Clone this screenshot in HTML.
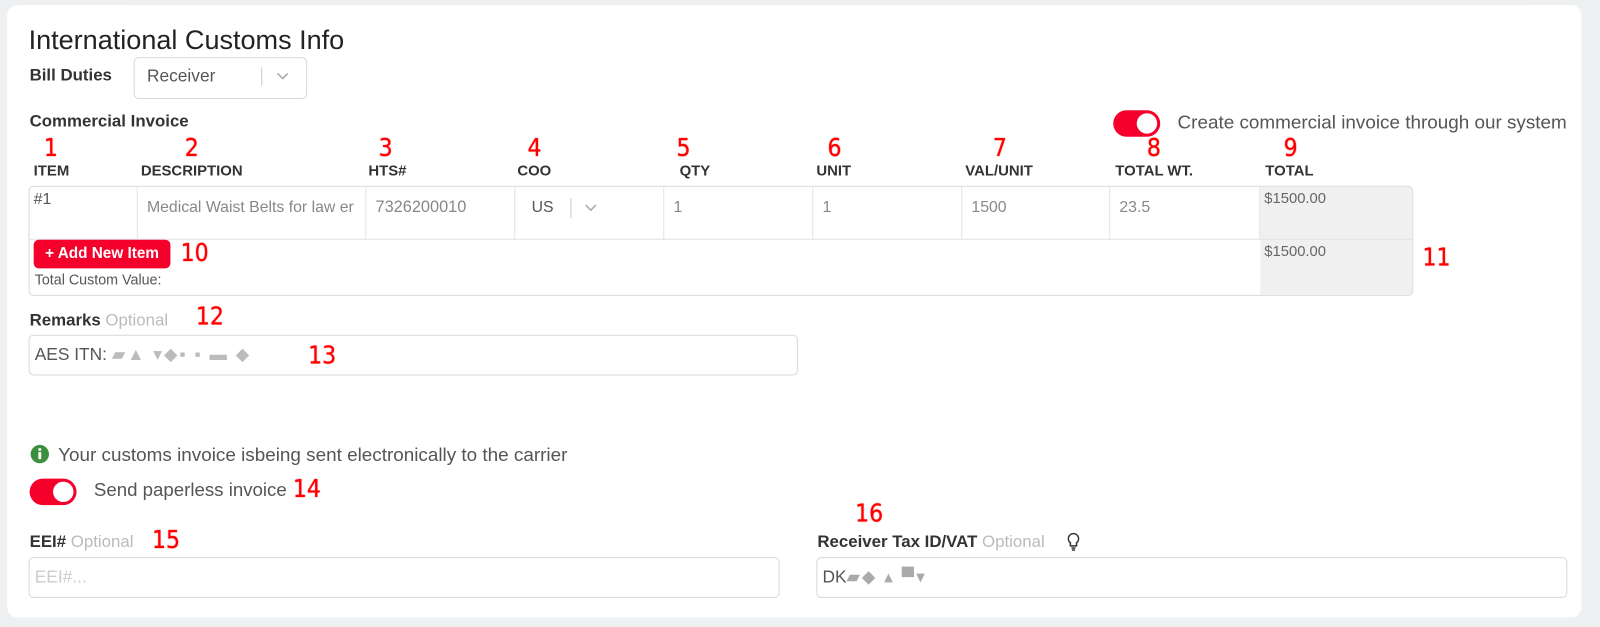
<!DOCTYPE html>
<html><head><meta charset="utf-8"><style>
body{margin:0;width:1600px;height:626px;background:#eef0f2;font-family:"Liberation Sans",sans-serif;overflow:hidden;color:#333}
#w{position:absolute;left:0;top:0;width:1568px;height:614px;transform:scale(1.0204);transform-origin:0 0}
.card{position:absolute;left:7px;top:5px;width:1543px;height:600px;background:#fff;border-radius:10px}
.a{position:absolute;white-space:nowrap}
.n{position:absolute;color:#f00;font-size:24px;font-family:"Liberation Sans Narrow","DejaVu Sans Condensed",sans-serif;text-shadow:0 0 1px #f00}
.h{font-size:14.6px;font-weight:bold;color:#333}
.box{position:absolute;border:1px solid #d9d9d9;border-radius:5px;background:#fff}
.cell{position:absolute;top:0;height:52px;border-right:1px solid #e3e3e3;font-size:15.5px;color:#888;line-height:42px;padding-left:9px;box-sizing:border-box}
.lbl{font-size:16.5px;font-weight:bold;color:#333}
.opt{color:#bbb;font-weight:normal}
.tog{position:absolute;width:46px;height:26px;border-radius:13px;background:#f5002a}
.tog::after{content:"";position:absolute;right:3px;top:3px;width:20px;height:20px;border-radius:50%;background:#fff}
</style></head><body><div id="w">
<div class="card"></div>
<div class="a" style="left:28px;top:24px;font-size:26.5px;color:#222">International Customs Info</div>
<div class="a lbl" style="left:29px;top:65px">Bill Duties</div>
<div class="box" style="left:131px;top:56px;width:168px;height:39px"></div>
<div class="a" style="left:144px;top:65px;font-size:17px;color:#555">Receiver</div>
<div class="a" style="left:256px;top:66px;width:1px;height:18px;background:#ccc"></div>
<svg class="a" style="left:270px;top:70px" width="14" height="10"><path d="M2 2l5 5 5-5" fill="none" stroke="#aaa" stroke-width="1.5"/></svg>
<div class="a lbl" style="left:29px;top:110px">Commercial Invoice</div>
<div class="tog" style="left:1091px;top:108px"></div>
<div class="a" style="left:1154px;top:109px;font-size:18.5px;color:#555">Create commercial invoice through our system</div>
<div class="n" style="left:43px;top:131px">1</div><div class="n" style="left:181px;top:131px">2</div><div class="n" style="left:371px;top:131px">3</div><div class="n" style="left:517px;top:131px">4</div><div class="n" style="left:663px;top:131px">5</div><div class="n" style="left:811px;top:131px">6</div><div class="n" style="left:973px;top:131px">7</div><div class="n" style="left:1124px;top:131px">8</div><div class="n" style="left:1258px;top:131px">9</div>
<div class="a h" style="left:33px;top:160px">ITEM</div><div class="a h" style="left:138px;top:160px">DESCRIPTION</div><div class="a h" style="left:361px;top:160px">HTS#</div><div class="a h" style="left:507px;top:160px">COO</div><div class="a h" style="left:666px;top:160px">QTY</div><div class="a h" style="left:800px;top:160px">UNIT</div><div class="a h" style="left:946px;top:160px">VAL/UNIT</div><div class="a h" style="left:1093px;top:160px">TOTAL WT.</div><div class="a h" style="left:1240px;top:160px">TOTAL</div>
<div class="box" style="left:28px;top:182px;width:1355px;height:106px;overflow:hidden">
 <div class="cell" style="left:0;width:106px;line-height:26px;padding-left:4px;color:#555">#1</div>
 <div class="cell" style="left:106px;width:224px">Medical Waist Belts for law er</div>
 <div class="cell" style="left:330px;width:146px;font-size:16px">7326200010</div>
 <div class="cell" style="left:476px;width:146px;color:#555;padding-left:16px">US<span style="display:inline-block;width:1px;height:20px;background:#ccc;margin-left:16px;vertical-align:middle"></span><svg style="margin-left:12px;vertical-align:middle" width="14" height="10"><path d="M2 2l5 5 5-5" fill="none" stroke="#aaa" stroke-width="1.5"/></svg></div>
 <div class="cell" style="left:622px;width:146px">1</div>
 <div class="cell" style="left:768px;width:146px">1</div>
 <div class="cell" style="left:914px;width:145px">1500</div>
 <div class="cell" style="left:1059px;width:147px">23.5</div>
 <div style="position:absolute;left:1206px;top:0;width:150px;height:106px;background:#f0f0f0"></div>
 <div style="position:absolute;left:1206px;top:51px;width:150px;height:1px;background:#e3e3e3"></div>
 <div style="position:absolute;left:0;top:51px;width:1206px;height:1px;background:#e3e3e3"></div>
 <div class="a" style="left:1210px;top:4px;font-size:14.5px;color:#666">$1500.00</div>
 <div class="a" style="left:1210px;top:56px;font-size:14.5px;color:#666">$1500.00</div>
</div>
<div class="a" style="left:33px;top:235px;width:134px;height:28px;background:#f5002a;border-radius:5px;color:#fff;font-weight:bold;font-size:15px;line-height:28px;text-align:center">+ Add New Item</div>
<div class="n" style="left:177px;top:234px">10</div>
<div class="a" style="left:34px;top:266px;font-size:14px;color:#555">Total Custom Value:</div>
<div class="n" style="left:1394px;top:238px">11</div>
<div class="a lbl" style="left:29px;top:305px">Remarks <span class="opt">Optional</span></div>
<div class="n" style="left:192px;top:296px">12</div>
<div class="box" style="left:28px;top:328px;width:752px;height:38px"></div>
<div class="a" style="left:34px;top:338px;font-size:17px;color:#555">AES ITN: <span style="color:#bbb;letter-spacing:2px">▰▲ ▾◆▪ ▪ ▬ ◆</span></div>
<div class="n" style="left:302px;top:334px">13</div>
<svg class="a" style="left:29px;top:435px" width="20" height="20"><circle cx="10" cy="10" r="9" fill="#3c8f3f"/><rect x="8.6" y="8" width="2.8" height="7" fill="#fff"/><circle cx="10" cy="5.5" r="1.5" fill="#fff"/></svg>
<div class="a" style="left:57px;top:435px;font-size:18.5px;color:#555">Your customs invoice isbeing sent electronically to the carrier</div>
<div class="tog" style="left:29px;top:469px"></div>
<div class="a" style="left:92px;top:469px;font-size:18.3px;color:#555">Send paperless invoice</div>
<div class="n" style="left:287px;top:465px">14</div>
<div class="a lbl" style="left:29px;top:522px">EEI# <span class="opt">Optional</span></div>
<div class="n" style="left:149px;top:515px">15</div>
<div class="box" style="left:28px;top:546px;width:734px;height:38px"></div>
<div class="a" style="left:34px;top:556px;font-size:17px;color:#ccc">EEI#...</div>
<div class="n" style="left:838px;top:489px">16</div>
<div class="a lbl" style="left:801px;top:522px">Receiver Tax ID/VAT <span class="opt">Optional</span></div>
<svg class="a" style="left:1045px;top:521px" width="14" height="20"><path d="M7 2a5 5 0 0 0-3 9v3h6v-3a5 5 0 0 0-3-9z" fill="none" stroke="#333" stroke-width="1.5"/><path d="M5 16h4M5.5 18h3" stroke="#333" stroke-width="1.5"/></svg>
<div class="box" style="left:800px;top:546px;width:734px;height:38px"></div>
<div class="a" style="left:806px;top:556px;font-size:17px;color:#555">DK<span style="color:#aaa;letter-spacing:2px">▰◆ ▴ ▀▾</span></div>
</div></body></html>
